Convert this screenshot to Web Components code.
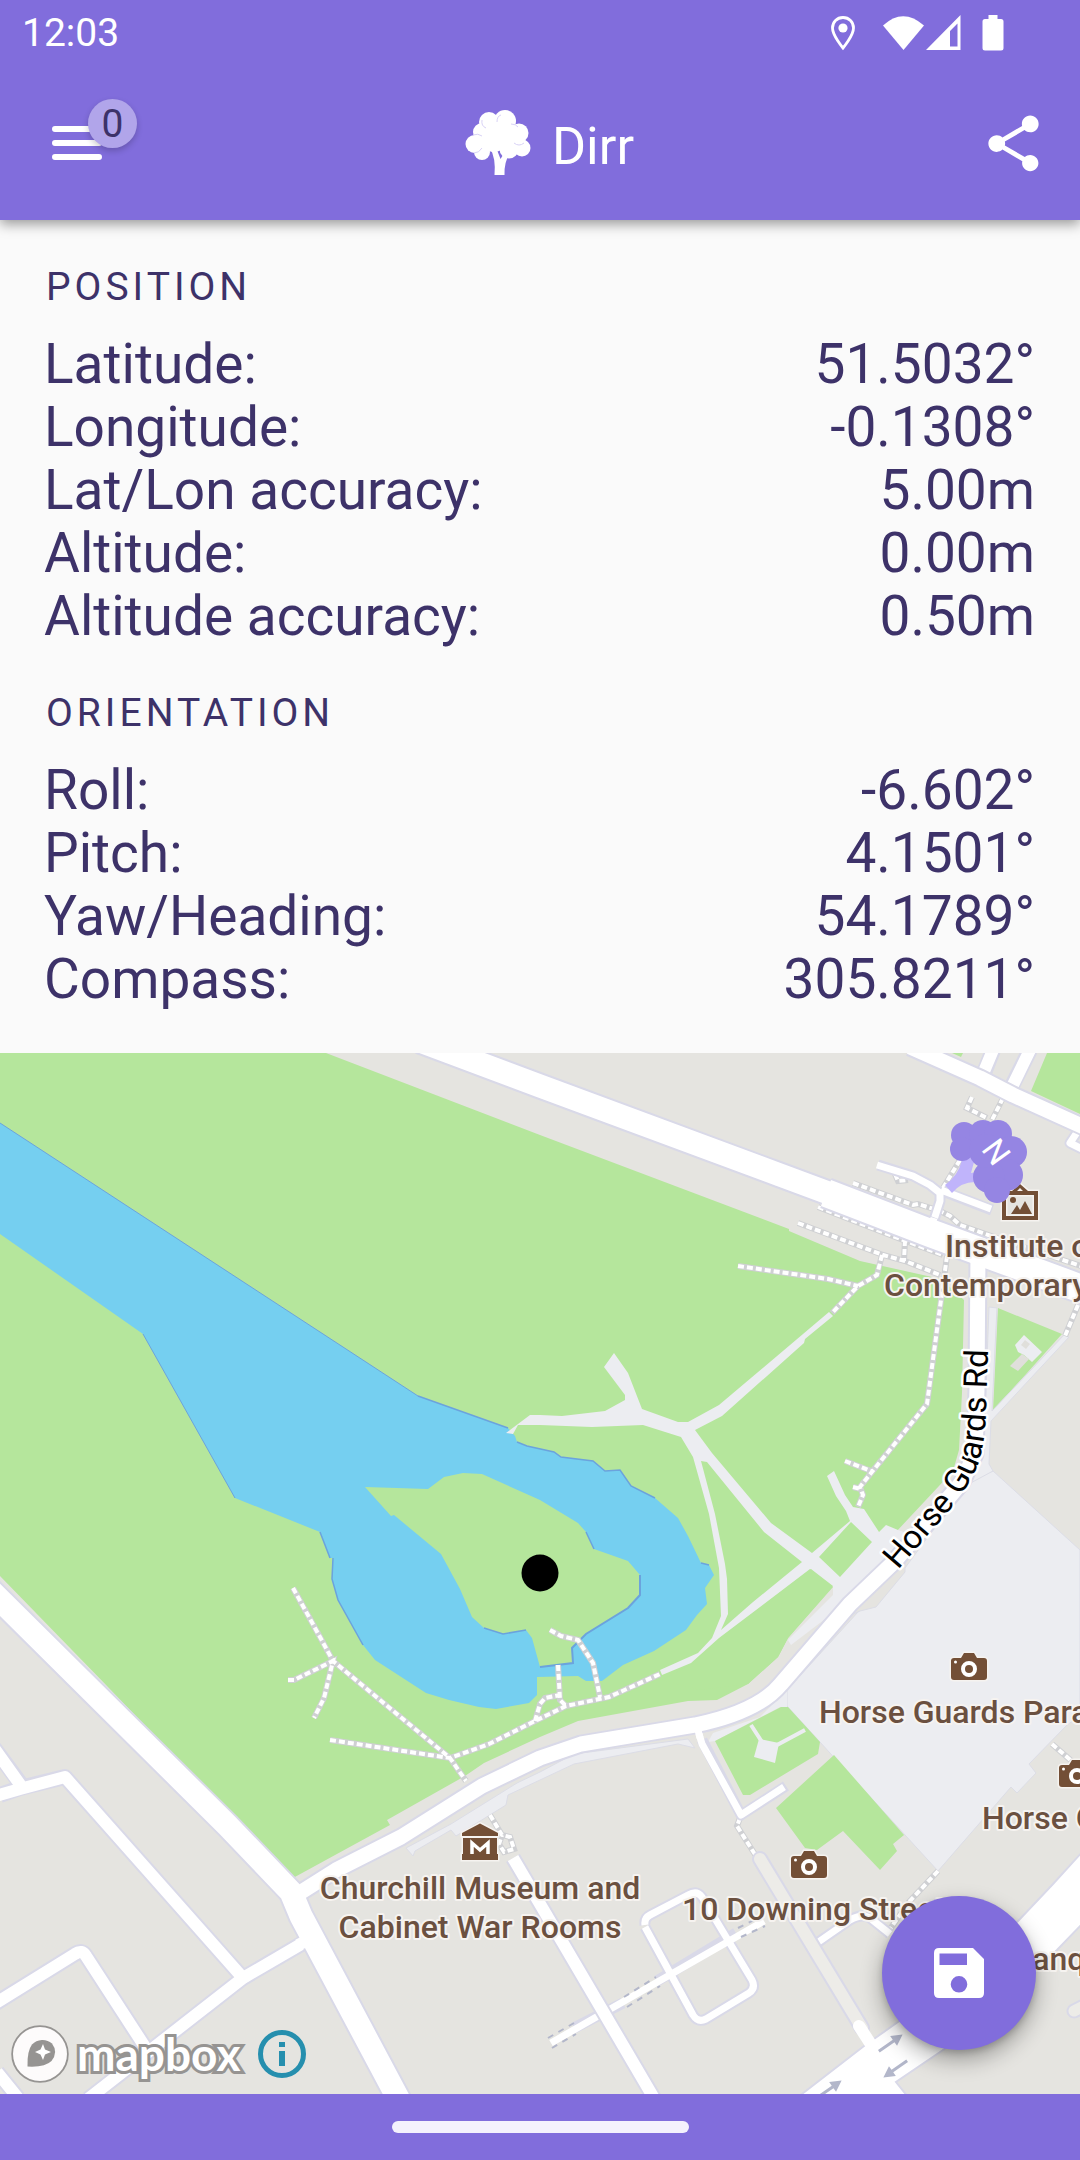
<!DOCTYPE html>
<html lang="en">
<head>
<meta charset="utf-8">
<meta name="viewport" content="width=device-width, initial-scale=1">
<title>Dirr</title>
<style>
  html, body { margin: 0; }
  body { font-family: Roboto, "Liberation Sans", sans-serif; background: #fafafa; }
</style>
</head>
<body>
<dirr-app></dirr-app>

<script>
const define = (name, html) => {
  const template = document.createElement('template');
  template.innerHTML = html;
  customElements.define(name, class extends HTMLElement {
    constructor() {
      super();
      this.attachShadow({ mode: 'open' }).append(template.content.cloneNode(true));
    }
  });
};

define('status-bar', `
<style>
  :host { display: flex; align-items: center; justify-content: space-between; box-sizing: border-box; height: 66px; padding: 0 76px 0 22px; color: #fff; background: #816ddc; }
  time { font-size: 39px; line-height: 66px; }
  .icons { display: flex; align-items: center; gap: 20px; }
  svg { display: block; fill: #fff; }
  .net { display: flex; }
</style>
<time>12:03</time>
<div class="icons">
  <svg width="30" height="36" viewBox="0 0 30 36"><path d="M13 2.500C7 2.500 2.500 7 2.500 13c0 7.500 10.500 20 10.500 20s10.500-12.500 10.500-20C23.500 7 19 2.500 13 2.500z" fill="none" stroke="#fff" stroke-width="2.800"/><circle cx="13" cy="13" r="4.600"/></svg>
  <div class="net">
    <svg width="46" height="36" viewBox="2 0 46 36"><path d="M5 10.500Q25-8 46 10.500L25.500 35z"/></svg>
    <svg width="36" height="36" viewBox="0 0 36 36"><path fill-rule="evenodd" d="M0 35L34.500 0V35zM24 16V31.500H31.500V8.500z"/></svg>
  </div>
  <svg width="22" height="36" viewBox="0 0 22 36"><path d="M6.500 0h9v4H19q2.500 0 2.500 2.500V33q0 2.500-2.500 2.500H3Q.5 35.500.5 33V6.500Q.5 4 3 4h3.500z"/></svg>
</div>`);

define('app-bar', `
<style>
  :host { position: relative; z-index: 1; display: grid; grid-template-columns: 1fr auto 1fr; align-items: center; box-sizing: border-box; height: 154px; padding: 0 33px 0 52px; color: #fff; background: #816ddc; box-shadow: 0 4px 12px rgba(0,0,0,.4); clip-path: inset(0 0 -24px 0); }
  button { position: relative; display: block; padding: 0; border: 0; background: none; color: inherit; }
  svg { display: block; fill: currentColor; }
  .badge { position: absolute; left: 36px; top: -10px; width: 49px; height: 49px; border-radius: 50%; background: #b1a5ea; color: #3d3269; font: 39px/50px Roboto, sans-serif; text-align: center; box-shadow: 0 3px 6px rgba(0,0,0,.2); }
  h1 { display: flex; align-items: flex-end; gap: 21px; margin: 0; font-size: 52px; font-weight: 400; line-height: 58px; }
  .share { justify-self: end; }
</style>
<button type="button" aria-label="Menu">
  <svg width="50" height="68" viewBox="0 0 50 68"><path d="M3 20H47M3 34H47M3 48H47" stroke="#fff" stroke-width="6" stroke-linecap="round"/></svg>
  <span class="badge">0</span>
</button>
<h1>
  <svg width="66" height="66" viewBox="0 0 66 66" aria-hidden="true"><g><circle cx="9.500" cy="34" r="9"/><circle cx="17" cy="22" r="9"/><circle cx="24" cy="12" r="10"/><circle cx="40" cy="11" r="11"/><circle cx="54" cy="23" r="9.500"/><circle cx="57" cy="38" r="8.500"/><circle cx="17" cy="42" r="8"/><circle cx="29" cy="29" r="13"/><circle cx="43" cy="28" r="14"/><circle cx="44" cy="39" r="9.500"/></g><path d="M25 38Q31 48 29.500 65H39.500Q39 52 45 43L38 45 35.500 49Q34 45 32 40z"/><path d="M8 25q5-2 9 1M17 10q-1 6 4 8M32 12q0-6 4-7M46 14q5 0 7 3M49 33q5 4 10 0M9 43q5 0 8-5" fill="none" stroke="#d9d3f6" stroke-width="1"/></svg>
  <span>Dirr</span>
</h1>
<button class="share" type="button" aria-label="Share">
  <svg width="67" height="67" viewBox="0 0 24 24"><path d="M18 16.080c-.76 0-1.440.3-1.960.770L8.910 12.700c.05-.23.090-.46.090-.7s-.04-.47-.09-.7l7.050-4.110c.54.5 1.250.810 2.040.810 1.660 0 3-1.340 3-3s-1.340-3-3-3-3 1.340-3 3c0 .24.040.47.090.7L8.040 9.810C7.500 9.310 6.790 9 6 9c-1.660 0-3 1.340-3 3s1.340 3 3 3c.79 0 1.500-.31 2.040-.81l7.120 4.160c-.05.210-.08.430-.08.650 0 1.610 1.310 2.920 2.920 2.920s2.920-1.310 2.920-2.920-1.310-2.920-2.920-2.920z"/></svg>
</button>`);

define('reading-group', `
<style>
  :host { display: flex; flex-direction: column; gap: 22px; color: #3d3269; }
  h2 { margin: 0; padding-left: 2px; font-size: 39px; font-weight: 400; line-height: 48px; letter-spacing: 4px; text-transform: uppercase; }
</style>
<h2><slot name="title"></slot></h2>
<div role="list"><slot></slot></div>`);

define('reading-row', `
<style>
  :host { display: flex; justify-content: space-between; font-size: 55px; line-height: 63px; }
</style>
<span><slot></slot></span><span><slot name="value"></slot></span>`);

define('position-map', `
<style>
  :host { position: relative; display: block; overflow: hidden; background: #e5e4e0; }
  .canvas { display: block; width: 100%; height: auto; }
  .canvas text { font-family: Roboto, "Liberation Sans", sans-serif; }
  .case { fill: none; stroke: #d9d9e8; stroke-linejoin: round; stroke-linecap: butt; }
  .road { fill: none; stroke: #fff; stroke-linejoin: round; }
  .w7 .case { stroke-width: 11; } .w7 .road { stroke-width: 7; }
  .w11 .case { stroke-width: 16; } .w11 .road { stroke-width: 12; }
  .w14 .case { stroke-width: 19; } .w14 .road { stroke-width: 15; }
  .w23 .case { stroke-width: 27; } .w23 .road { stroke-width: 23; }
  .park { fill: #b5e69c; }
  .paved { fill: #ecedf1; stroke: #dcdde6; stroke-width: 1; }
  .foot { fill: none; stroke: #cfd0d3; stroke-width: 6; }
  .dash { fill: none; stroke: #fff; stroke-width: 4; stroke-dasharray: 6 3; }
  .poi { fill: #6b5040; font-size: 32px; font-weight: 500; stroke: #f6f3f0; stroke-width: 4; stroke-linejoin: round; paint-order: stroke; }
  .street { fill: #000; font-size: 33px; stroke: #fff; stroke-width: 5; stroke-linejoin: round; paint-order: stroke; }
  .icon { fill: #734f36; stroke: #f6f3f0; stroke-width: 3; paint-order: stroke; }
  .credits { position: absolute; left: 11px; bottom: 11px; display: flex; align-items: center; gap: 18px; }
  .brand { display: flex; align-items: center; gap: 8px; color: #fff; text-decoration: none; font: 700 46px/58px Lato, sans-serif; -webkit-text-stroke: 6px #969492; paint-order: stroke fill; }
  .brand svg, .info svg { display: block; }
  button { display: grid; place-items: center; padding: 0; border: 0; background: none; }
  .save { position: absolute; right: 44px; bottom: 44px; width: 154px; height: 154px; border-radius: 50%; background: #816ddc; box-shadow: 0 10px 22px rgba(0,0,0,.32), 0 3px 6px rgba(0,0,0,.16); }
</style>
<svg class="canvas" viewBox="0 1053 1080 1041">
  <defs>
    <g id="camera"><path class="icon" d="M-15-9H-8L-5-14H5L8-9H15Q18-9 18-6V10Q18 13 15 13H-15Q-18 13-18 10V-6Q-18-9-15-9z"/><circle cy="2" r="6" fill="none" stroke="#fff" stroke-width="4"/><circle cx="-13.500" cy="-5" r="1.500" fill="#fff"/></g>
    <path id="hgr" d="M898 1570L935 1527Q968 1491 979 1462Q985 1440 986 1415L989 1320"/>
    <path id="arrow" d="M0 0H18V-4.500L29 1.500 18 7.500V3H0z" fill="#b3b7ca"/>
  </defs>

  <!-- parks, lake and island -->
  <path class="park" d="M0 1053H326L540 1135 789 1229V1231L860 1261 941 1279 964 1300 962 1393 959 1450 953 1471 896 1532 833 1587 788 1638 778 1657 748 1684 717 1700 688 1701 578 1721 540 1737 484 1763 465 1776 387 1820 390 1825 293 1878 253 1838 107 1686 0 1576z"/>
  <path class="park" d="M1047 1053L1031 1091 1080 1114V1053zM952 1053H963L961 1057zM998 1308L1062 1334 993 1411z"/>
  <path fill="#75cff0" d="M0 1123L418 1396 508 1428 515 1436 517 1442 527 1446 554 1452 561 1457 593 1461 605 1471 620 1470 631 1486 655 1498 678 1518 688 1536 701 1563 709 1565 714 1575 705 1588 707 1604 697 1615 686 1630 654 1651 623 1665 602 1681H586L578 1676 537 1677V1695L529 1703 496 1709 479 1707 449 1700 426 1693 375 1660 363 1645 338 1600 332 1579 333 1558 330 1558 320 1532 235 1498 143 1334 0 1234z"/>
  <path class="park" d="M365 1487L428 1489 444 1477 463 1473 482 1474 540 1500 578 1523 586 1532 594 1549 628 1561 640 1575V1595L628 1608 586 1634 572 1648 573 1663 540 1667 532 1638 526 1630 503 1634 484 1628 472 1617 460 1589 441 1554 394 1515 391 1516z"/>
  <path fill="none" stroke="#6ba3dd" stroke-width="1.500" d="M418 1396L508 1428M517 1442L527 1446 554 1452 561 1457 593 1461 605 1471 620 1470 631 1486 655 1498M320 1532L330 1558M333 1558L332 1579 338 1600 363 1645M484 1628L503 1634 526 1630M586 1532L594 1549M701 1563L709 1565"/>
  <path fill="none" stroke="#6ba3dd" stroke-width="1" d="M0 1123L418 1396M143 1334L235 1498"/>
  <path fill="none" stroke="#6ba3dd" stroke-width="2" d="M640 1575V1595L628 1608 586 1634 572 1648 573 1663 540 1667"/>

  <!-- paved walks and the parade ground -->
  <path fill="#ecedf1" d="M506 1433L530 1415H540L562 1416 605 1411 625 1400V1395L604 1367 614 1353 628 1373 642 1409 678 1422H688L719 1405 829 1312 833 1316 805 1339 804 1343 795 1351 722 1416 695 1430 712 1453 771 1523 812 1553 850 1521 846 1511 836 1496 827 1476 834 1471 845 1495 853 1507 864 1509 879 1532 886 1525 898 1530 912 1535 850 1600 791 1645 788 1640 833 1595V1587L810 1569 719 1638 691 1663 662 1675 660 1670 698 1653 712 1638 721 1616 719 1568 709 1514 693 1457 681 1437 643 1425 592 1427 540 1425H518L513 1434z"/>
  <path class="park" d="M701 1461L707 1462 764 1532 802 1562 753 1602 721 1630 728 1614 727 1579 725 1564 715 1514zM819 1557L851 1522 872 1542 840 1577zM720 1638L811 1569 833 1586 788 1638 778 1657 748 1684 700 1690 662 1680 692 1664z"/>
  <path class="paved" d="M993 1471L1080 1550V1716L1067 1725 1029 1764 1036 1773 1017 1793 1011 1787 938 1871 787 1706V1690L858 1612 905 1568 970 1480z"/>
  <path fill="#e5e4e0" stroke="#dcdde6" d="M851 1615L905 1561V1572L876 1607 860 1611z"/>
  <path class="paved" d="M989 1307L997 1308 992 1411 1064 1335 1069 1337 991 1421 989 1464 993 1471 965 1486 984 1440z"/>
  <path fill="#ecedf1" d="M1015 1345L1024 1335 1042 1352 1032 1362 1024 1355 1018 1352z"/><path fill="#e0dfdb" d="M1010 1366L1022 1354 1029 1359 1018 1371zM1021 1345L1025 1340 1030 1344 1026 1349z"/>
  <path class="paved" d="M406 1848L451 1824 517 1783 540 1772 574 1754 688 1739 695 1748 678 1744 574 1764 540 1780 508 1795 506 1805 456 1836 451 1830 415 1851 413 1856z"/>
  <path fill="#ecedf1" d="M708 1742L713 1733 760 1717 787 1690V1707H780L715 1741z"/>
  <path class="park" d="M715 1741L781 1707H788L820 1742 818 1754 750 1795H743zM834 1755L904 1835 893 1844 897 1851 880 1870 843 1831 817 1850 805 1848 776 1808z"/>
  <path fill="#ecedf1" d="M759 1739L779 1743 775 1763 754 1757z"/><path fill="none" stroke="#ecedf1" stroke-width="4" d="M751 1725L762 1742M805 1730L777 1745"/>

  <!-- footpaths -->
  <g id="feet"></g>

  <!-- streets: casing first, then surface -->
  <g class="w7"><path class="case" d="M878 1165L913 1176 930 1185 940 1193V1201L932 1226M943 1191L992 1210M1078 1131L1070 1143 1082 1149M702 1740L741 1815 786 1786M817 1943L850 1920Q862 1913 870 1918L890 1934M645 1925Q644 1918 650 1915L688 1895Q697 1890 702 1897L752 1980Q756 1988 749 1993L706 2019Q698 2023 693 2015L645 1927M574 2028L623 2003M657 1981L736 1933"/>
    <path class="road" d="M877 1165L913 1176 930 1185 940 1193V1201L932 1226M941 1190L991 1209M1078 1131L1070 1143 1082 1149M697 1727L702 1744 741 1815 784 1787M817 1943L850 1920Q862 1913 870 1918L890 1934M645 1925Q644 1918 650 1915L688 1895Q697 1890 702 1897L752 1980Q756 1988 749 1993L706 2019Q698 2023 693 2015L645 1927M551 2043L764 1921"/></g>
  <g class="w11"><path class="case" d="M0 1795L20 1788 65 1777 243 1978M20 1783L-6 1748M303 1943L243 1978 88 2099M-4 2003L75 1954Q82 1949 86 1956L147 2050M-3 2072L18 2098M513 1858L604 2013 655 2100M982 1078L993 1050M1010 1090L1030 1050"/>
    <path class="road" d="M-4 1796L20 1789 65 1777 243 1978M24 1790L-6 1748M303 1943L243 1978 88 2099M-4 2003L75 1954Q82 1949 86 1956L147 2050M-3 2072L18 2098M513 1858L604 2013 655 2100M980 1081L993 1050M1010 1091L1030 1050"/></g>
  <path d="M760 1859L862 2028" stroke="#d9d9e8" stroke-width="16" stroke-linecap="round"/><path d="M760 1859L862 2028" stroke="#edece8" stroke-width="12" stroke-linecap="round"/>
  <g class="w14"><path class="case" d="M910 1047L980 1078 1013 1095 1084 1127M978 1255L977 1389 975 1454 962 1482 895 1561 850 1604 781 1684Q758 1712 695 1725L581 1744 540 1758 482 1786 401 1837 336 1870 298 1894"/></g>
  <g class="w23"><path class="case" d="M-10 1590L227 1825 291 1892 301 1916 400 2102M420 1041L540 1086 780 1175 850 1201"/></g>
  <path class="case" stroke-width="32" d="M826 1193L930 1233 1090 1292"/>
  <g class="w14"><path class="road" d="M910 1047L980 1078 1013 1095 1084 1127M978 1250L977 1389 975 1454 962 1482 895 1561 850 1604 781 1684Q758 1712 695 1725L581 1744 540 1758 482 1786 401 1837 336 1870 298 1894"/></g>
  <g class="w23"><path class="road" d="M-10 1590L227 1825 291 1892 301 1916 400 2102M420 1041L540 1086 780 1175 850 1201"/></g>
  <path class="road" stroke-width="28" d="M826 1193L930 1233 1090 1292"/>
  <path class="road" stroke-width="7" d="M934 1218L930 1230M700 1738L697 1726"/>
  <path class="road" stroke-width="12" d="M298 1945L312 1938M240 1979L246 1976"/>
  <path fill="#fff" stroke="#d9d9e8" stroke-width="2" d="M798 2097L864 2046 950 1985 1019 1920 1053 1884 1084 1850V1922L1057 1950 1000 2005 946 2048 896 2082 908 2097z"/>
  <path d="M859 2026L872 2046" stroke="#fff" stroke-width="12" stroke-linecap="round"/>
  <path d="M1074 2011L1090 2003" stroke="#d9d9e8" stroke-width="15" stroke-linecap="round"/><path d="M1074 2011L1090 2003" stroke="#edece8" stroke-width="11" stroke-linecap="round"/>
  <use href="#arrow" transform="translate(878 2050) rotate(-35)"/><use href="#arrow" transform="translate(908 2062) rotate(145)"/><use href="#arrow" transform="translate(817 2096) rotate(-35)"/>
  <path fill="none" stroke="#b3b7ca" stroke-width="2" stroke-dasharray="6 6" d="M548 2038L574 2023M552 2048L576 2034M624 1997L656 1977M627 2007L660 1986M738 1928L762 1916M741 1937L765 1926"/>

  <!-- places -->
  <path class="icon" fill-rule="evenodd" d="M1002 1191H1012L1020 1184 1028 1191H1038V1220H1002zM1006 1195V1216H1034V1195zM1017 1191H1023L1020 1188z"/><path fill="#734f36" d="M1011 1214L1017 1205 1020 1210 1025 1201 1032 1214z"/><circle cx="1013" cy="1200" r="3" fill="#734f36"/>
  <path class="icon" d="M462 1833L480 1823.500 498 1833V1836H462zM463 1838H497V1854H498V1860H462V1854H463z"/><path d="M472 1854V1843L480 1850 488 1843V1854" fill="none" stroke="#fff" stroke-width="3.500"/>
  <use href="#camera" x="969" y="1667"/><use href="#camera" x="809" y="1865"/><use href="#camera" x="1077" y="1774"/>
  <text class="poi" x="945" y="1257">Institute of</text>
  <text class="poi" x="884" y="1296">Contemporary</text>
  <text class="poi" x="480" y="1899" text-anchor="middle">Churchill Museum and</text>
  <text class="poi" x="480" y="1938" text-anchor="middle">Cabinet War Rooms</text>
  <text class="poi" x="682" y="1920">10 Downing Street</text>
  <text class="poi" x="819" y="1723">Horse Guards Parade</text>
  <text class="poi" x="982" y="1829">Horse Guards</text>
  <text class="poi" x="1012" y="1970">Banqueting</text>
  <text class="street"><textPath href="#hgr">Horse Guards Rd</textPath></text>

  <!-- heading marker and the current position -->
  <path fill="#c0b4fb" d="M968 1155L974 1162 971 1173 977 1172 975 1182Q961 1182 952 1193L945 1185Q958 1176 962 1160z"/>
  <g fill="#9585e3"><circle cx="964" cy="1135" r="13"/><circle cx="962" cy="1149" r="12"/><circle cx="983" cy="1134" r="14"/><circle cx="998" cy="1134" r="14"/><circle cx="1011" cy="1152" r="16"/><circle cx="1007" cy="1175" r="16"/><circle cx="989" cy="1177" r="16"/><circle cx="997" cy="1190" r="13"/><circle cx="986" cy="1151" r="17"/></g>
  <text transform="translate(996 1152) rotate(54)" y="11" text-anchor="middle" font-size="32" fill="#fff">N</text>
  <circle cx="540" cy="1573" r="18.500"/>
</svg>

<div class="credits">
  <a class="brand" href="#mapbox">
    <svg width="58" height="58" viewBox="0 0 58 58" aria-hidden="true"><circle cx="29" cy="29" r="27" fill="#fdfbfb" stroke="#969492" stroke-width="3.500"/><path fill="#969492" d="M16.500 41.500Q16 26 21 19.500A14.500 14.500 0 0 1 41 18.500Q47.500 27 40.500 36 34 42.500 16.500 41.500z"/><path fill="#fff" d="M32 19L34 24.500 40 27 34 29.500 32 35 29.500 29.500 24 27 29.500 24.500z"/></svg>
    <span>mapbox</span>
  </a>
  <button class="info" type="button" aria-label="Attribution"><svg width="48" height="48" viewBox="0 0 48 48"><circle cx="24" cy="24" r="21.500" fill="none" stroke="#268fae" stroke-width="5"/><path fill="#268fae" d="M21 12h6v5h-6zM21 21h6v15h-6z"/></svg></button>
</div>
<button class="save" type="button" aria-label="Save"><svg width="50" height="50" viewBox="0 0 50 50"><path fill="#fff" fill-rule="evenodd" d="M5 0H39L50 11V45Q50 50 45 50H5Q0 50 0 45V5Q0 0 5 0zM5.500 5.500V17H33V5.500zM25 28A8.300 8.300 0 1 0 25 44.600 8.300 8.300 0 1 0 25 28z"/></svg></button>`);

/* Footpaths are drawn twice: a grey bed and white dashes over it. */
customElements.define('walk-map', class extends customElements.get('position-map') {
  connectedCallback() {
    const feet = 'M853 1183L913 1205 918 1204 940 1211 950 1216 960 1225 997 1238 1027 1248 1084 1267M818 1207L903 1240 943 1255M798 1223L883 1255 905 1261 940 1275M905 1240L904 1261M882 1255L877 1275 858 1286 832 1313M738 1266L828 1279 858 1286M947 1256L941 1300 927 1404 871 1473 860 1487 863 1495 858 1507M845 1461L871 1471M853 1487L861 1489M1003 1098L992 1120M972 1097L967 1108 987 1118M960 1160L943 1188M895 1174L898 1181 908 1180M1078 1305L1065 1336M293 1588L320 1637 333 1661 450 1758 466 1781M288 1680H294L333 1661 324 1698 314 1718M330 1740L450 1758 489 1744 535 1721 566 1706 609 1697 660 1674M550 1630L561 1636 578 1640 593 1663 600 1697M558 1665L560 1700 566 1706M535 1721L540 1704 545 1698 560 1695M740 1818L737 1826 756 1856M490 1815L502 1835 510 1837 514 1849 504 1852 499 1844 502 1835M938 1871L908 1903M888 1932L902 1912M1052 1744L1075 1764';
    this.shadowRoot.getElementById('feet').innerHTML = `<path class="foot" d="${feet}"/><path class="dash" d="${feet}"/>`;
  }
});

define('nav-handle', `
<style>
  :host { display: grid; place-items: center; height: 66px; background: #816ddc; }
  span { width: 297px; height: 12px; border-radius: 6px; background: #f4f1fd; }
</style>
<span></span>`);

define('dirr-app', `
<style>
  :host { display: flex; flex-direction: column; min-height: 100vh; }
  main { display: flex; flex-direction: column; flex: 1; }
  .readings { display: flex; flex-direction: column; gap: 41px; padding: 43px 45px 42px 44px; background: #fafafa; }
  walk-map { flex: 1; }
</style>
<status-bar></status-bar>
<app-bar></app-bar>
<main>
  <div class="readings">
    <reading-group><span slot="title">Position</span>
      <reading-row role="listitem">Latitude:<span slot="value">51.5032°</span></reading-row>
      <reading-row role="listitem">Longitude:<span slot="value">-0.1308°</span></reading-row>
      <reading-row role="listitem">Lat/Lon accuracy:<span slot="value">5.00m</span></reading-row>
      <reading-row role="listitem">Altitude:<span slot="value">0.00m</span></reading-row>
      <reading-row role="listitem">Altitude accuracy:<span slot="value">0.50m</span></reading-row>
    </reading-group>
    <reading-group><span slot="title">Orientation</span>
      <reading-row role="listitem">Roll:<span slot="value">-6.602°</span></reading-row>
      <reading-row role="listitem">Pitch:<span slot="value">4.1501°</span></reading-row>
      <reading-row role="listitem">Yaw/Heading:<span slot="value">54.1789°</span></reading-row>
      <reading-row role="listitem">Compass:<span slot="value">305.8211°</span></reading-row>
    </reading-group>
  </div>
  <walk-map></walk-map>
</main>
<nav-handle></nav-handle>`);
</script>
</body>
</html>
